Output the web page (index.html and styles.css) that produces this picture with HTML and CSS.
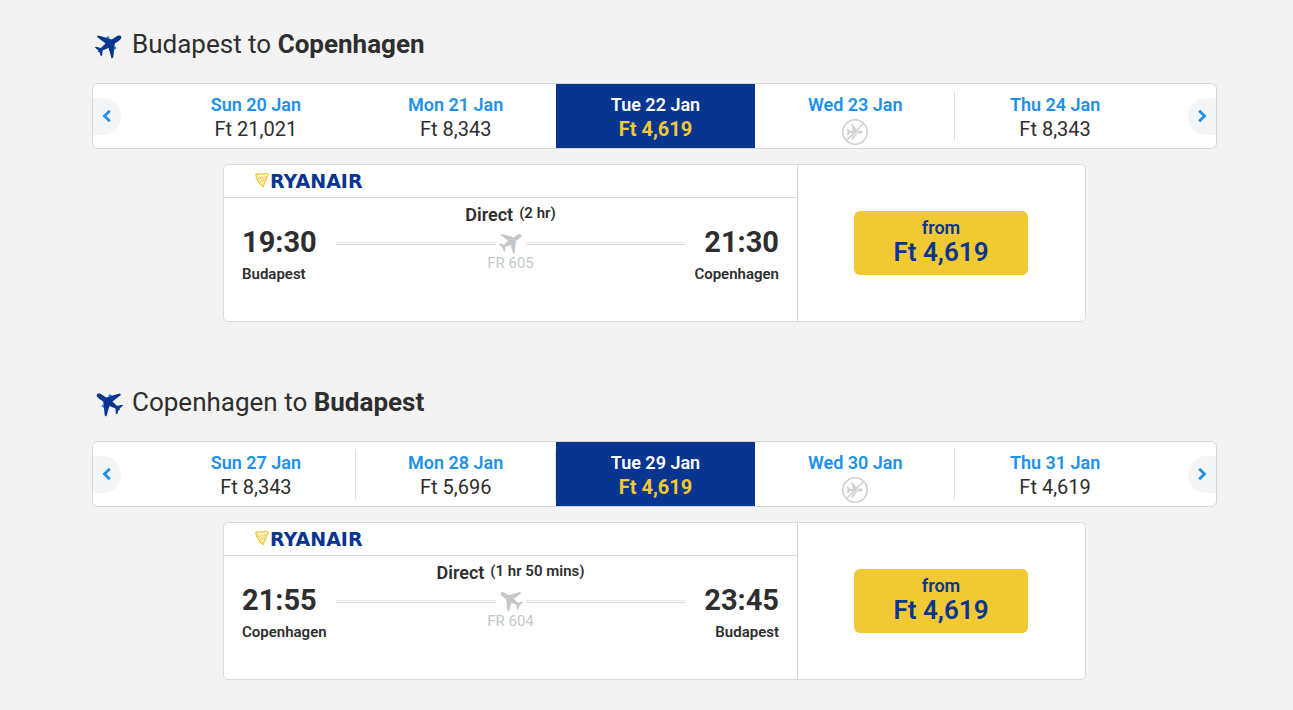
FILE: index.html
```html
<!DOCTYPE html>
<html lang="en">
<head>
<meta charset="utf-8">
<title>Select flights</title>
<link rel="stylesheet" href="styles.css">
</head>
<body>
<svg class="defs" aria-hidden="true">
  <symbol id="plane" viewBox="0 0 28 28">
    <path transform="translate(14.200 12.300) rotate(56)" d="M0-14.200C1.800-14.200 2.500-11.800 2.500-9.800V-5L13.200 4V6L2.700 2.600 1.500 9 5.400 12.200V13.600L.6 12.400 0 14-.6 12.400-5.400 13.600V12.200L-1.500 9-2.700 2.600-13.200 6V4L-2.500-5V-9.800C-2.500-11.800-1.800-14.200 0-14.200z"/>
  </symbol>
  <symbol id="engines" viewBox="0 0 28 28">
    <path transform="translate(14.200 12.300) rotate(56)" d="M-7.400-4h2.400V2h-2.400zM5-4h2.400V2H5z"/>
  </symbol>
  <symbol id="no-flight" viewBox="0 0 28 28">
    <circle cx="14" cy="14" r="12.200" fill="none" stroke="currentColor" stroke-width="1.600"/>
    <path transform="translate(14 14) rotate(90) scale(.6)" fill="currentColor" d="M0-13C1.700-13 2.300-10.500 2.300-8.500V-4L13 4V6.500L2.300 3.500 1.600 8 5.600 11.500V13.600L0 12.400-5.600 13.600V11.500L-1.600 8-2.300 3.500-13 6.500V4L-2.300-4V-8.500C-2.300-10.500-1.700-13 0-13z"/>
    <path d="M6.400 23.800 23.800 6.400" stroke="#fff" stroke-width=".8"/>
    <path d="M5.300 22.700 22.700 5.300" stroke="currentColor" stroke-width="1.600"/>
  </symbol>
  <symbol id="harp" viewBox="0 0 14 16">
    <path d="M.8 2.600C3 .8 6 3 9 1.800 10.500 1.200 12 1.300 13 2.200L8.200 14.500C5 12.500 1.800 8.500.8 2.600z" fill="none" stroke="#f1c933" stroke-width="1.300"/>
    <path d="M2 3.200C4 7 6 10 8 13M4.500 3.600 8.400 11.500M7 3.600 9.200 9.500M9.500 3.200 10.200 7M2.500 6.500 11.500 5M4 9.500 10.500 7.500M1 1.500 3.500 3.500" fill="none" stroke="#f1c933" stroke-width=".7"/>
  </symbol>
  <symbol id="chevron" viewBox="0 0 10 14">
    <path d="M7.800 1.800 2.500 7 7.800 12.200" fill="none" stroke="currentColor" stroke-width="2.800"/>
  </symbol>
</svg>
<main class="page">
  <section class="trip">
    <h2 class="route"><svg class="route-icon"><use class="engine" href="#engines"/><use href="#plane"/></svg><span>Budapest to <b>Copenhagen</b></span></h2>
    <div class="dates">
      <button class="arrow" aria-label="Previous dates"><svg><use href="#chevron"/></svg></button>
      <button class="date"><span class="day">Sun 20 Jan</span><span class="fare">Ft 21,021</span></button>
      <button class="date"><span class="day">Mon 21 Jan</span><span class="fare">Ft 8,343</span></button>
      <button class="date selected"><span class="day">Tue 22 Jan</span><span class="fare">Ft 4,619</span></button>
      <button class="date divided"><span class="day">Wed 23 Jan</span><svg class="none" role="img" aria-label="No flights"><use href="#no-flight"/></svg></button>
      <button class="date"><span class="day">Thu 24 Jan</span><span class="fare">Ft 8,343</span></button>
      <button class="arrow next" aria-label="Next dates"><svg><use href="#chevron"/></svg></button>
    </div>
    <article class="flight">
      <div class="details">
        <header class="carrier"><svg class="harp"><use href="#harp"/></svg><span>RYANAIR</span></header>
        <div class="schedule">
          <div class="stop"><span class="time">19:30</span><span class="city">Budapest</span></div>
          <div class="leg">
            <div class="kind"><span>Direct</span><span class="length">(2 hr)</span></div>
            <div class="track"><svg><use href="#plane"/></svg></div>
            <div class="number">FR 605</div>
          </div>
          <div class="stop arrival"><span class="time">21:30</span><span class="city">Copenhagen</span></div>
        </div>
      </div>
      <div class="price"><button class="buy"><span class="from">from</span><span class="amount">Ft 4,619</span></button></div>
    </article>
  </section>
  <section class="trip">
    <h2 class="route"><svg class="route-icon inbound"><use class="engine" href="#engines"/><use href="#plane"/></svg><span>Copenhagen to <b>Budapest</b></span></h2>
    <div class="dates">
      <button class="arrow" aria-label="Previous dates"><svg><use href="#chevron"/></svg></button>
      <button class="date divided"><span class="day">Sun 27 Jan</span><span class="fare">Ft 8,343</span></button>
      <button class="date divided"><span class="day">Mon 28 Jan</span><span class="fare">Ft 5,696</span></button>
      <button class="date selected"><span class="day">Tue 29 Jan</span><span class="fare">Ft 4,619</span></button>
      <button class="date divided"><span class="day">Wed 30 Jan</span><svg class="none" role="img" aria-label="No flights"><use href="#no-flight"/></svg></button>
      <button class="date"><span class="day">Thu 31 Jan</span><span class="fare">Ft 4,619</span></button>
      <button class="arrow next" aria-label="Next dates"><svg><use href="#chevron"/></svg></button>
    </div>
    <article class="flight">
      <div class="details">
        <header class="carrier"><svg class="harp"><use href="#harp"/></svg><span>RYANAIR</span></header>
        <div class="schedule">
          <div class="stop"><span class="time">21:55</span><span class="city">Copenhagen</span></div>
          <div class="leg">
            <div class="kind"><span>Direct</span><span class="length">(1 hr 50 mins)</span></div>
            <div class="track"><svg class="inbound"><use href="#plane"/></svg></div>
            <div class="number">FR 604</div>
          </div>
          <div class="stop arrival"><span class="time">23:45</span><span class="city">Budapest</span></div>
        </div>
      </div>
      <div class="price"><button class="buy"><span class="from">from</span><span class="amount">Ft 4,619</span></button></div>
    </article>
  </section>
</main>
</body>
</html>
```
FILE: styles.css
```css
*, *::before, *::after { box-sizing: border-box; }
body {
  margin: 0;
  background: #f3f3f3;
  color: #2e2e2e;
  font-family: Roboto, "Liberation Sans", sans-serif;
}
button {
  border: 0;
  padding: 0;
  background: none;
  color: inherit;
  font: inherit;
  cursor: pointer;
}
.defs { position: absolute; width: 0; height: 0; }
.page {
  display: flex;
  flex-direction: column;
  gap: 60px;
  padding: 24px 76px 30px 92px;
}
.route {
  display: flex;
  align-items: center;
  gap: 9px;
  margin: 0 0 19px 3px;
  font-size: 26px;
  line-height: 40px;
  font-weight: 400;
}
.route b { font-weight: 700; }
.route-icon { width: 28px; height: 28px; margin-top: 3px; fill: #073590; }
.engine { fill: #2091eb; }
.inbound { transform: scaleX(-1); }

.dates {
  display: grid;
  grid-template-columns: 63px repeat(5, 1fr) 61px;
  min-height: 66px;
  background: #fff;
  border: 1px solid #d3d6da;
  border-radius: 6px;
  overflow: hidden;
}
.arrow {
  align-self: center;
  display: flex;
  align-items: center;
  justify-content: center;
  width: 28px;
  height: 37px;
  border-radius: 0 18px 18px 0;
  background: #f3f5f7;
  color: #2091eb;
}
.arrow svg { width: 10px; height: 14px; }
.next { justify-self: end; transform: scaleX(-1); }
.date {
  display: flex;
  flex-direction: column;
  align-items: center;
  padding-top: 9px;
}
.day { font-size: 18px; line-height: 24px; font-weight: 600; color: #2091eb; }
.fare { font-size: 20px; line-height: 25px; font-weight: 400; }
.none { width: 28px; height: 28px; margin-top: 1px; color: #cdd1d5; }
.divided {
  background: linear-gradient(#dcdfe2, #dcdfe2) right center / 1px 50px no-repeat;
}
.selected { background: #073590; }
.selected .day { color: #fff; }
.selected .fare { color: #f1c933; font-weight: 700; }

.flight {
  display: grid;
  grid-template-columns: 2fr 1fr;
  min-height: 158px;
  margin: 15px 131px 0;
  background: #fff;
  border: 1px solid #d8dbe2;
  border-radius: 5px;
}
.details { border-right: 1px solid #d3d6da; }
.carrier {
  display: flex;
  align-items: center;
  gap: 1px;
  height: 33px;
  padding-left: 31px;
  border-bottom: 1px solid #d8dbe2;
  color: #073590;
  font: bold 19px/30px "DejaVu Sans", sans-serif;
}
.harp { width: 14px; height: 16px; margin-bottom: 3px; }
.schedule {
  display: grid;
  grid-template-columns: 94px 1fr 94px;
  padding: 5px 18px 0;
}
.stop { display: flex; flex-direction: column; padding-top: 22px; }
.arrival { align-items: flex-end; }
.time { font-size: 29px; line-height: 34px; font-weight: 700; }
.city { font-size: 15px; line-height: 30px; font-weight: 600; }
.leg { text-align: center; }
.kind {
  display: flex;
  justify-content: center;
  gap: 6px;
  margin-bottom: 4px;
  font-size: 18px;
  line-height: 24px;
  font-weight: 600;
}
.length { font-size: 15px; line-height: 20px; }
.track { display: flex; align-items: center; gap: 3px; height: 24px; }
.track::before, .track::after {
  content: "";
  flex: 1;
  height: 3px;
  border-top: 1px solid #e6e9ec;
  border-bottom: 1px solid #d3d7dc;
}
.track svg { width: 24px; height: 24px; fill: #c2c8ce; }
.number { font-size: 15px; line-height: 16px; color: #c2c8ce; }
.price { display: flex; justify-content: center; align-items: flex-start; padding: 46px 1px 0 0; }
.buy {
  display: flex;
  flex-direction: column;
  align-items: center;
  justify-content: center;
  width: 174px;
  height: 64px;
  padding-bottom: 2px;
  border-radius: 6px;
  background: #f1c933;
  color: #073590;
  font-weight: 600;
}
.from { font-size: 18px; line-height: 20px; }
.amount { font-size: 26px; line-height: 29px; }
```
